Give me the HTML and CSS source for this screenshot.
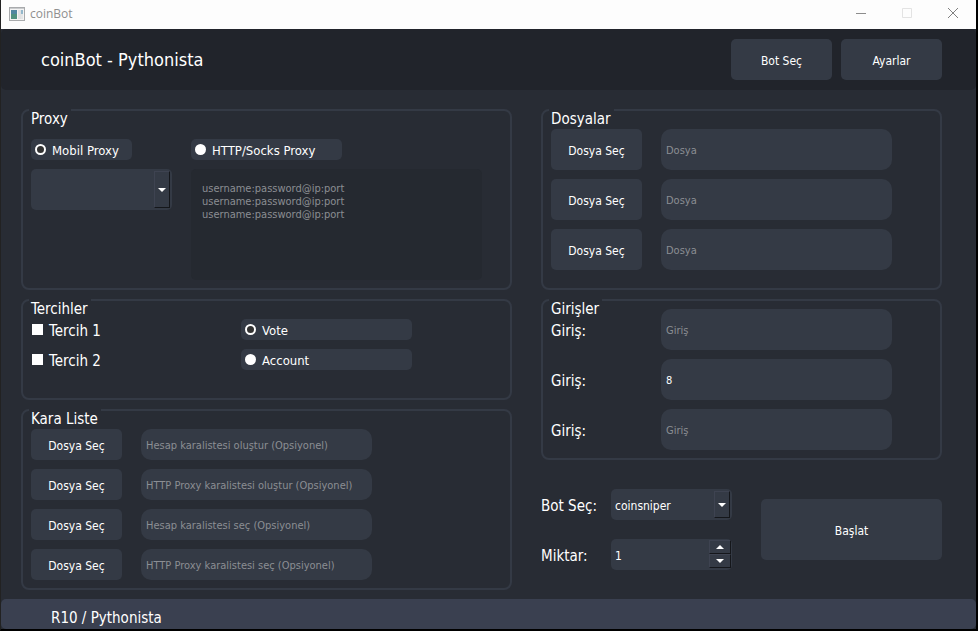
FILE: index.html
```html
<!DOCTYPE html>
<html lang="tr">
<head>
    <meta charset="UTF-8">
    <title>coinBot</title>
    <link rel="stylesheet" href="styles.css">
</head>
<body>
    <div class="window">
        <div class="titlebar">
            <svg class="app-icon" width="16" height="14" viewBox="0 0 16 14">
                <rect x="0.5" y="0.5" width="15" height="13" fill="#f4f4f4" stroke="#a9abad"/>
                <rect x="1" y="1" width="14" height="1" fill="#c9cbcd"/>
                <rect x="2" y="3" width="6" height="9" fill="#4f86a0"/>
                <rect x="2" y="7" width="6" height="5" fill="#4f9180"/>
                <rect x="9" y="3" width="3" height="9" fill="#dfe1e3"/>
                <rect x="12" y="3" width="2" height="4" fill="#93b8cc"/>
                <rect x="12" y="7" width="2" height="5" fill="#e4e6e7"/>
            </svg>
            <span class="app-name">coinBot</span>
            <div class="window-buttons">
                <button type="button" aria-label="Küçült"><svg width="12" height="12" viewBox="0 0 12 12"><path d="M1 5.5h10" stroke="#8c8c8c"/></svg></button>
                <button type="button" aria-label="Büyüt" disabled><svg width="12" height="12" viewBox="0 0 12 12"><path d="M1.5 0.5h9v9h-9z" fill="none" stroke="#e3e3e3"/></svg></button>
                <button type="button" aria-label="Kapat"><svg width="12" height="12" viewBox="0 0 12 12"><path d="M1 0l10 10M11 0L1 10" stroke="#808080"/></svg></button>
            </div>
        </div>

        <header class="header">
            <h1>coinBot - Pythonista</h1>
            <nav>
                <button type="button" class="btn">Bot Seç</button>
                <button type="button" class="btn">Ayarlar</button>
            </nav>
        </header>

        <main class="content">
            <div class="column">
                <fieldset class="group proxy">
                    <legend>Proxy</legend>
                    <div class="proxy-grid">
                        <label class="radio mobile"><input type="radio" name="proxy" checked><span>Mobil Proxy</span></label>
                        <label class="radio http"><input type="radio" name="proxy"><span>HTTP/Socks Proxy</span></label>
                        <div class="combo tall">
                            <select aria-label="Mobil Proxy"><option></option></select>
                            <span class="arrow"></span>
                        </div>
                        <textarea aria-label="Proxy listesi" placeholder="username:password@ip:port
username:password@ip:port
username:password@ip:port"></textarea>
                    </div>
                </fieldset>

                <fieldset class="group prefs">
                    <legend>Tercihler</legend>
                    <div class="prefs-grid">
                        <label class="check"><input type="checkbox"><span>Tercih 1</span></label>
                        <label class="radio"><input type="radio" name="mode" checked><span>Vote</span></label>
                        <label class="check"><input type="checkbox"><span>Tercih 2</span></label>
                        <label class="radio"><input type="radio" name="mode"><span>Account</span></label>
                    </div>
                </fieldset>

                <fieldset class="group blacklist">
                    <legend>Kara Liste</legend>
                    <div class="rows">
                        <div class="row">
                            <button type="button" class="btn">Dosya Seç</button>
                            <input type="text" class="field" placeholder="Hesap karalistesi oluştur (Opsiyonel)">
                        </div>
                        <div class="row">
                            <button type="button" class="btn">Dosya Seç</button>
                            <input type="text" class="field" placeholder="HTTP Proxy karalistesi oluştur (Opsiyonel)">
                        </div>
                        <div class="row">
                            <button type="button" class="btn">Dosya Seç</button>
                            <input type="text" class="field" placeholder="Hesap karalistesi seç (Opsiyonel)">
                        </div>
                        <div class="row">
                            <button type="button" class="btn">Dosya Seç</button>
                            <input type="text" class="field" placeholder="HTTP Proxy karalistesi seç (Opsiyonel)">
                        </div>
                    </div>
                </fieldset>
            </div>

            <div class="column">
                <fieldset class="group files">
                    <legend>Dosyalar</legend>
                    <div class="rows">
                        <div class="row">
                            <button type="button" class="btn">Dosya Seç</button>
                            <input type="text" class="field" placeholder="Dosya">
                        </div>
                        <div class="row">
                            <button type="button" class="btn">Dosya Seç</button>
                            <input type="text" class="field" placeholder="Dosya">
                        </div>
                        <div class="row">
                            <button type="button" class="btn">Dosya Seç</button>
                            <input type="text" class="field" placeholder="Dosya">
                        </div>
                    </div>
                </fieldset>

                <fieldset class="group inputs">
                    <legend>Girişler</legend>
                    <div class="rows">
                        <div class="row">
                            <label for="giris1">Giriş:</label>
                            <input type="text" id="giris1" class="field" placeholder="Giriş">
                        </div>
                        <div class="row">
                            <label for="giris2">Giriş:</label>
                            <input type="text" id="giris2" class="field" value="8">
                        </div>
                        <div class="row">
                            <label for="giris3">Giriş:</label>
                            <input type="text" id="giris3" class="field" placeholder="Giriş">
                        </div>
                    </div>
                </fieldset>

                <div class="launch">
                    <div class="launch-form">
                        <label for="bot">Bot Seç:</label>
                        <div class="combo">
                            <select id="bot"><option>coinsniper</option></select>
                            <span class="arrow"></span>
                        </div>
                        <label for="miktar">Miktar:</label>
                        <div class="spin">
                            <input type="number" id="miktar" value="1" min="1">
                            <div class="spin-buttons">
                                <button type="button" class="up" aria-label="Artır"></button>
                                <button type="button" class="down" aria-label="Azalt"></button>
                            </div>
                        </div>
                    </div>
                    <button type="button" class="btn start">Başlat</button>
                </div>
            </div>
        </main>

        <footer class="footer">R10 / Pythonista</footer>
    </div>
</body>
</html>
```
FILE: styles.css
```css
* {
    box-sizing: border-box;
}

body {
    margin: 0;
    background-color: #000000;
    color: #ffffff;
    font-family: "DejaVu Sans Condensed", "Noto Sans", sans-serif;
    font-size: 15px;
}

button, input, select, textarea {
    font-family: inherit;
    color: inherit;
    border: none;
    outline: none;
}

/* Window frame */
.window {
    display: flex;
    flex-direction: column;
    min-height: 100vh;
    background-color: #282c34;
    border: solid #000000;
    border-width: 0 2px 2px 0;
    border-left: 1px solid #222222;
}

.titlebar {
    display: flex;
    align-items: center;
    height: 29px;
    padding-left: 8px;
    padding-bottom: 2px;
    background-color: #fdfdfd;
    color: #8f8f8f;
}

.app-name {
    margin-left: 5px;
    font-family: "Open Sans", sans-serif;
    font-size: 12px;
}

.window-buttons {
    display: flex;
    margin-left: auto;
}

.window-buttons button {
    display: flex;
    align-items: center;
    justify-content: center;
    width: 46px;
    height: 27px;
    padding: 0;
    background: none;
}

.header {
    display: flex;
    align-items: center;
    justify-content: space-between;
    height: 61px;
    padding: 0 34px 0 40px;
    border-radius: 5px;
    background-color: #21242b;
}

h1 {
    margin: 0;
    font-size: 18px;
    font-weight: normal;
}

.header nav {
    display: flex;
    gap: 9px;
}

.header .btn {
    width: 101px;
    height: 41px;
}

.btn {
    padding: 2px 0 0;
    border-radius: 5px;
    background-color: #343a45;
    font-size: 12px;
}

.btn:hover {
    background-color: #3c4250;
}

/* Content */
.content {
    display: grid;
    grid-template-columns: 491fr 401fr;
    gap: 29px;
    flex: 1;
    align-items: start;
    padding: 19px 34px 9px 20px;
}

.column {
    display: flex;
    flex-direction: column;
    gap: 9px;
}

.group {
    display: flex;
    flex-direction: column;
    align-items: stretch;
    min-width: 0;
    margin: 0;
    padding: 0 8px 8px;
    border: 2px solid #343a45;
    border-radius: 8px;
}

/* floated so the title sits inside the frame, just under its top edge */
.group legend {
    float: left;
    align-self: flex-start;
    height: 20px;
    margin: -2px 0 0 -2px;
    padding: 0 3px 0 2px;
    background-color: #282c34;
    line-height: 20px;
}

.rows {
    display: flex;
    flex-direction: column;
    gap: 9px;
}

.row {
    display: flex;
    align-items: center;
    gap: 19px;
}

.row .btn, .row label {
    flex: 0 0 91px;
}

.row label, .launch label, .radio span, .check span {
    padding-top: 2px;
}

.row .btn, .field {
    height: 41px;
}

.field {
    flex: 0 1 231px;
    min-width: 0;
    padding: 2px 5px 0;
    border-radius: 10px;
    background-color: #343a45;
    font-size: 11px;
}

::placeholder {
    color: #8b8e93;
    opacity: 1;
}

.blacklist .btn, .blacklist .field {
    height: 31px;
}

.files {
    padding-bottom: 18px;
}

.inputs .rows {
    margin-top: -10px;
}

.proxy-grid {
    display: grid;
    grid-template-columns: 141px minmax(0, 291px);
    gap: 9px 19px;
    align-items: start;
    margin-top: 10px;
}

.prefs {
    padding-bottom: 28px;
}

.prefs-grid {
    display: grid;
    grid-template-columns: 191px minmax(0, 171px);
    gap: 9px 19px;
}

.radio {
    display: flex;
    align-items: center;
    gap: 6px;
    height: 21px;
    padding-left: 4px;
    border-radius: 5px;
    background-color: #343a45;
    font-size: 13px;
}

.mobile {
    width: 101px;
}

.http {
    width: 151px;
}

.radio input {
    appearance: none;
    width: 11px;
    height: 11px;
    margin: 0;
    border-radius: 50%;
    background-color: #ffffff;
}

.radio input:checked {
    border: 2px solid #ffffff;
    background-color: #333333;
}

.check {
    display: flex;
    align-items: center;
    gap: 6px;
    height: 21px;
    padding-left: 1px;
}

.check input {
    appearance: none;
    width: 11px;
    height: 11px;
    margin: 0;
    background-color: #ffffff;
}

.check input:checked {
    border: 3px solid #ffffff;
    background-color: #333333;
}

textarea {
    width: 100%;
    height: 111px;
    padding: 13px 11px;
    border-radius: 5px;
    background-color: #252930;
    font-size: 11px;
    line-height: 13px;
    resize: none;
}

/* Drop-downs and the number box */
.combo, .spin {
    position: relative;
    height: 31px;
}

.combo.tall {
    height: 41px;
}

.combo select, .spin input {
    appearance: none;
    width: 100%;
    height: 100%;
    padding: 2px 24px 0 4px;
    border-radius: 5px;
    background-color: #343a45;
    font-size: 12px;
}

.spin input {
    appearance: textfield;
}

.spin input::-webkit-inner-spin-button {
    display: none;
}

.arrow {
    position: absolute;
    top: 2px;
    right: 2px;
    bottom: 2px;
    width: 16px;
    pointer-events: none;
}

.spin-buttons {
    position: absolute;
    top: 1px;
    right: 1px;
    bottom: 2px;
    display: flex;
    flex-direction: column;
    width: 22px;
}

.spin-buttons button {
    flex: 1;
    padding: 0;
}

.arrow, .spin-buttons button {
    display: flex;
    align-items: center;
    justify-content: center;
    border: 1px solid #15171b;
    border-top-color: #3e4351;
    border-left-color: #3e4351;
    background-color: #343a45;
}

.arrow::before, .spin-buttons button::before {
    content: "";
    border: 4px solid transparent;
    border-top-color: #ffffff;
    border-bottom: none;
}

.spin-buttons .up::before {
    border-top: none;
    border-bottom: 4px solid #ffffff;
}

.launch {
    display: flex;
    align-items: center;
    justify-content: space-between;
    gap: 29px;
    margin-top: 20px;
}

.launch-form {
    display: grid;
    grid-template-columns: 70px 121px;
    align-items: center;
    row-gap: 19px;
}

.start {
    flex: 0 1 181px;
    height: 61px;
}

.footer {
    height: 30px;
    padding: 4px 50px 0;
    border-radius: 5px;
    background-color: #3a4050;
    line-height: 30px;
}
```
